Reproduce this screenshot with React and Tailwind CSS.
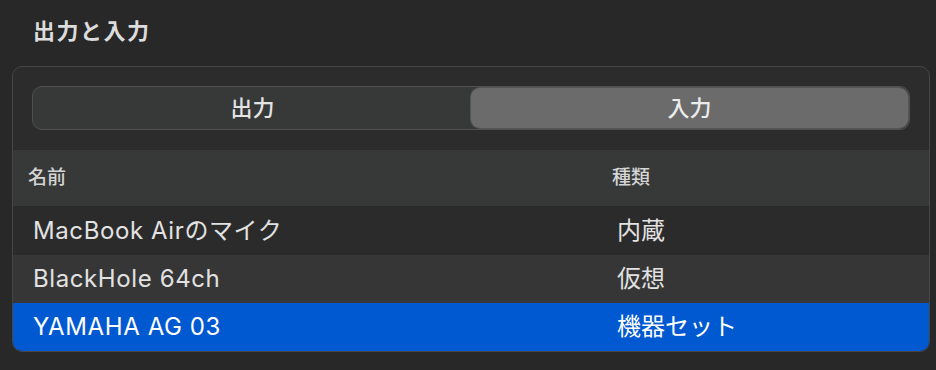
import React from 'react';

const font = { fontFamily: 'Inter, "Noto Sans CJK JP", sans-serif' };

const devices = [
  { name: 'MacBook Airのマイク', type: '内蔵' },
  { name: 'BlackHole 64ch', type: '仮想' },
  { name: 'YAMAHA AG 03', type: '機器セット', selected: true },
];

const App = () => {
  return (
    <div className="w-[936px] h-[370px] bg-[#282828] pt-[16px] pl-[12px] pr-[6px]" style={font}>
      <h2 className="ml-[21px] text-[22px] leading-[30px] tracking-[1.5px] font-semibold text-[#dcdcdc]">出力と入力</h2>
      <div className="mt-[20px] rounded-[10px] border border-[#464646] bg-[#2c2c2c] overflow-hidden">
        <div className="px-[19px] pt-[19px] pb-[20px]">
          <div className="flex h-[44px] rounded-[10px] border border-[#505050] bg-[#373939] p-px">
            <button className="flex-1 text-[22px] text-[#e4e4e4] font-medium">出力</button>
            <button className="flex-1 rounded-[9px] bg-[#6b6b6b] text-[22px] text-[#ececec] font-medium shadow-[0_0_0_1px_#555]">入力</button>
          </div>
        </div>
        <div className="grid grid-cols-[584px_1fr] h-[57px] items-center bg-[#373939] border-b border-[#2a2a2a] text-[19px] text-[#d4d4d4] font-medium">
          <div className="pl-[15px]">名前</div>
          <div className="pl-[15px]">種類</div>
        </div>
        {devices.map((d, i) => (
          <div
            key={d.name}
            className={`grid grid-cols-[584px_1fr] h-[48px] items-center text-[24px] ${
              d.selected ? 'bg-[#0059d1] text-white' : i % 2 === 0 ? 'bg-[#2b2b2b] text-[#e2e2e2]' : 'bg-[#363636] text-[#e2e2e2]'
            }`}
          >
            <div className="pl-[20px] tracking-[0.6px]">{d.name}</div>
            <div className="pl-[20px]">{d.type}</div>
          </div>
        ))}
      </div>
    </div>
  );
};

export default App;
